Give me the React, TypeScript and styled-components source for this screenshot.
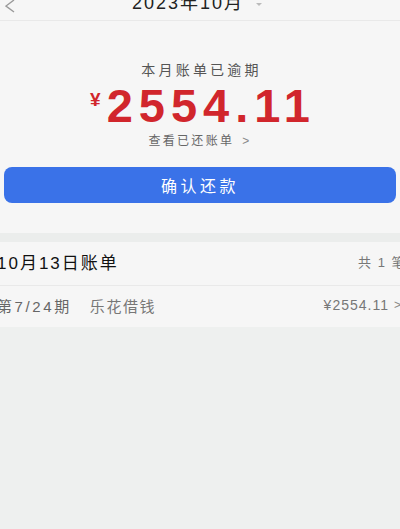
import { createGlobalStyle, styled } from "styled-components";

const GlobalStyle = createGlobalStyle`
  html, body {
    margin: 0;
    padding: 0;
    background: #eef0ef;
    overflow: hidden;
  }
  body {
    font-family: "Liberation Sans", "Noto Sans CJK SC", sans-serif;
  }
`;

const bill = {
  month: "2023年10月",
  status: "本月账单已逾期",
  amount: "2554.11",
  date: "10月13日账单",
  count: 1,
  period: "第7/24期",
  product: "乐花借钱",
};

function App() {
  return (
    <Page>
      <GlobalStyle />
      <Header>
        <BackArrow>
          <svg width="10" height="14" viewBox="0 0 10 14">
            <polyline
              points="9,0 1,6 9,12"
              fill="none"
              stroke="#9a9a9a"
              strokeWidth="1.4"
            />
          </svg>
        </BackArrow>
        <TitleWrap>
          <Title>{bill.month}</Title>
          <Caret />
        </TitleWrap>
        <span />
      </Header>

      <Summary>
        <StatusLabel>{bill.status}</StatusLabel>
        <Amount>
          <Yen>¥</Yen>
          <AmountValue>{bill.amount}</AmountValue>
        </Amount>
        <HistoryLink>
          查看已还账单<Chevron $gap={8}>&gt;</Chevron>
        </HistoryLink>
        <PayButton>确认还款</PayButton>
      </Summary>

      <BillCard>
        <BillHead>
          <BillDate>{bill.date}</BillDate>
          <BillCount>共 {bill.count} 笔</BillCount>
        </BillHead>
        <BillRow>
          <Period>{bill.period}</Period>
          <Product>{bill.product}</Product>
          <RowAmount>
            ¥{bill.amount}
            <Chevron $gap={5}>&gt;</Chevron>
          </RowAmount>
        </BillRow>
      </BillCard>
    </Page>
  );
}

const Page = styled.div`
  width: 400px;
  min-height: 529px;
  background: #eef0ef;
`;

const Header = styled.header`
  display: grid;
  grid-template-columns: 1fr auto 1fr;
  align-items: end;
  height: 20px;
  background: #f6f6f6;
  border-bottom: 1px solid #e9e9e9;
  overflow: hidden;
`;

const BackArrow = styled.div`
  display: flex;
  align-items: flex-start;
  height: 20px;
  padding-left: 5px;
  margin-top: -3px;
`;

const TitleWrap = styled.div`
  display: flex;
  align-items: center;
  gap: 12px;
  margin-right: 6px;
  height: 20px;
`;

const Title = styled.span`
  font-size: 18px;
  line-height: 18px;
  color: #222;
  margin-top: -14px;
  letter-spacing: 2px;
`;

const Caret = styled.span`
  width: 0;
  height: 0;
  border-left: 3px solid transparent;
  border-right: 3px solid transparent;
  border-top: 3px solid #bbb;
  margin-top: -12px;
`;

const Summary = styled.section`
  display: flex;
  flex-direction: column;
  align-items: center;
  padding: 39px 4px 30px;
  background: #f6f6f6;
  border-bottom: 9px solid #ebedec;
`;

const StatusLabel = styled.div`
  font-size: 14px;
  line-height: 20px;
  color: #555;
  letter-spacing: 3.2px;
  margin-left: 3px;
`;

const Amount = styled.div`
  display: flex;
  align-items: flex-start;
  margin-top: 2px;
  color: #d1262c;
  font-weight: bold;
`;

const Yen = styled.span`
  font-size: 19px;
  line-height: 19px;
  margin-top: 8px;
  margin-right: 6px;
`;

const AmountValue = styled.span`
  font-size: 47px;
  line-height: 47px;
  letter-spacing: 6px;
  margin-right: -6px;
`;

const HistoryLink = styled.div`
  display: flex;
  align-items: center;
  margin-top: 4px;
  font-size: 12px;
  line-height: 16px;
  color: #666;
  letter-spacing: 2.3px;
`;

const Chevron = styled.span<{ $gap: number }>`
  margin-left: ${({ $gap }) => $gap}px;
  color: #888;
  font-size: 12px;
`;

const PayButton = styled.button`
  align-self: stretch;
  margin-top: 18px;
  height: 36px;
  border: none;
  border-radius: 8px;
  background: #3a72e8;
  color: #fff;
  font-family: "Noto Sans CJK SC", sans-serif;
  font-size: 16px;
  letter-spacing: 3.5px;
  padding-left: 6px;
`;

const BillCard = styled.section`
  background: #f6f6f6;
  margin-right: -6px;
  margin-left: -3px;
`;

const BillHead = styled.div`
  display: flex;
  justify-content: space-between;
  align-items: center;
  height: 43px;
  border-bottom: 1px solid #e9e9e9;
`;

const BillDate = styled.span`
  font-size: 17px;
  color: #111;
  letter-spacing: 2px;
  margin-top: -4px;
`;

const BillCount = styled.span`
  font-size: 13px;
  color: #777;
  letter-spacing: 1.5px;
  margin-top: -4px;
`;

const BillRow = styled.div`
  display: flex;
  align-items: center;
  height: 41px;
  font-size: 15px;
  color: #666;
`;

const Period = styled.span`
  letter-spacing: 2.6px;
  margin-top: -3px;
`;

const Product = styled.span`
  margin-left: 18px;
  letter-spacing: 1.6px;
  color: #777;
  flex: 1;
  margin-top: -3px;
`;

const RowAmount = styled.span`
  display: flex;
  align-items: center;
  color: #777;
  font-size: 14px;
  letter-spacing: 1px;
  margin-top: -3px;
  margin-right: 4px;
`;

export default App;
